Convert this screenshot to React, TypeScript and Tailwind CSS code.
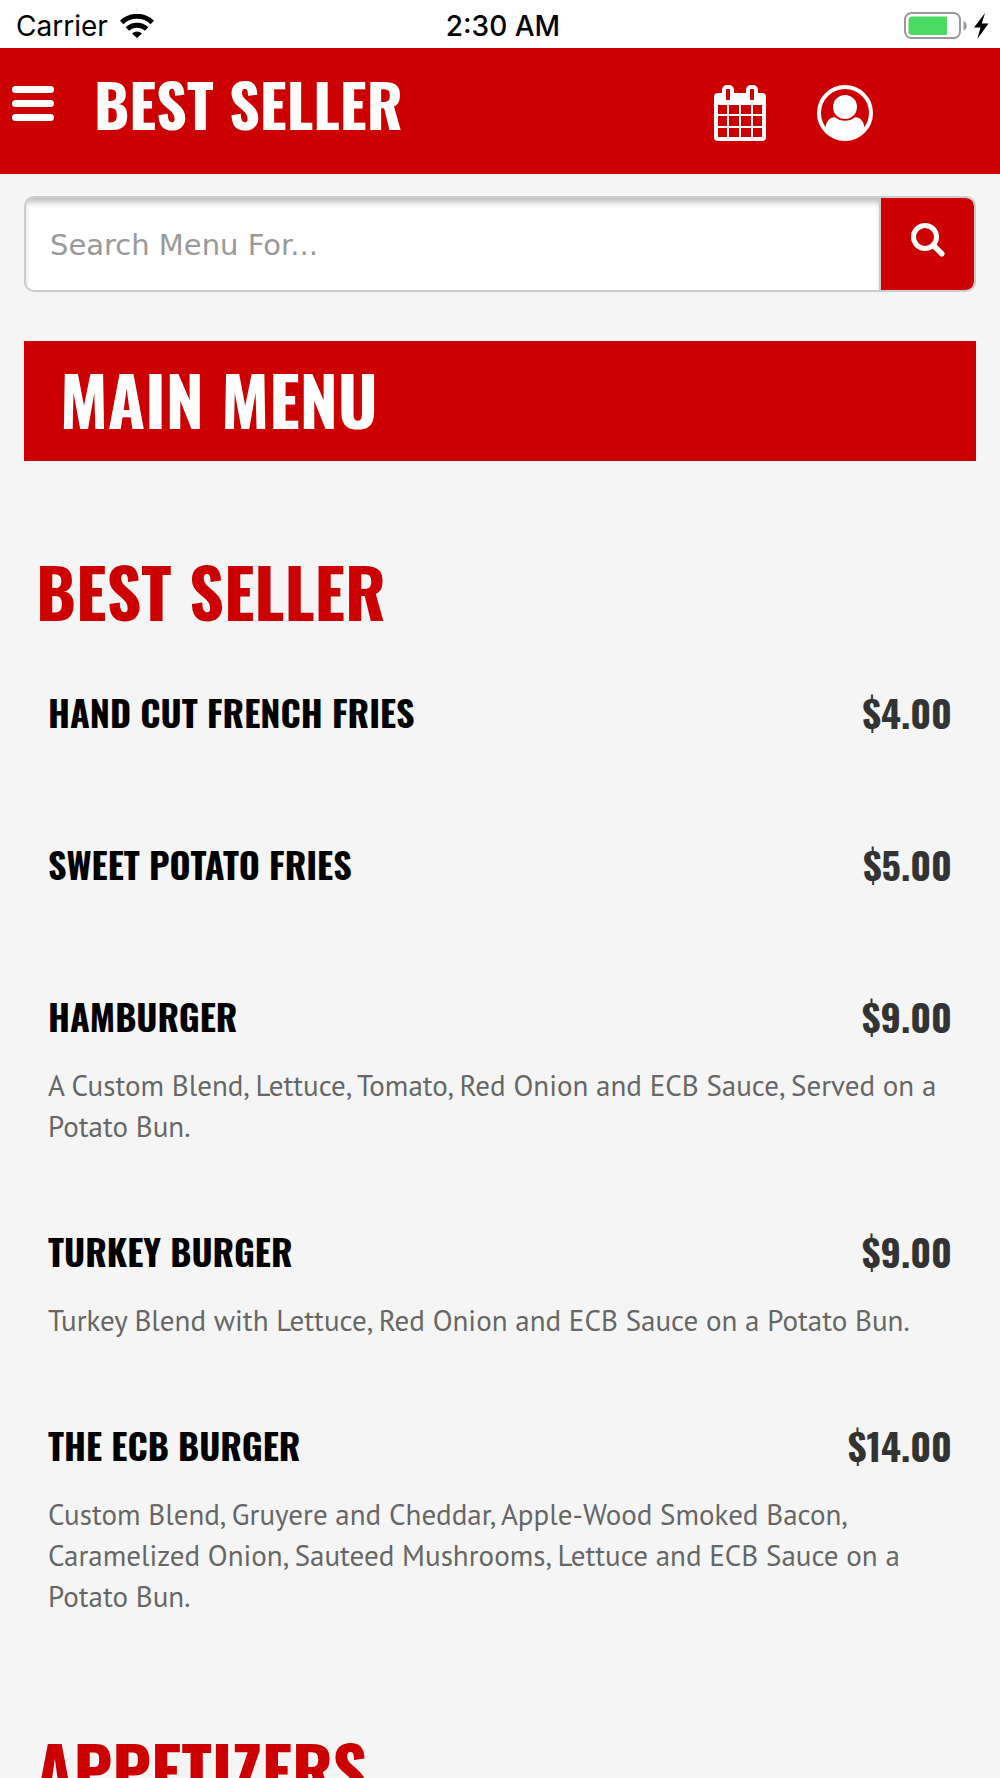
const menu = [
  {
    title: 'BEST SELLER',
    items: [
      { name: 'HAND CUT FRENCH FRIES', price: '$4.00' },
      { name: 'SWEET POTATO FRIES', price: '$5.00' },
      {
        name: 'HAMBURGER',
        price: '$9.00',
        description:
          'A Custom Blend, Lettuce, Tomato, Red Onion and ECB Sauce, Served on a Potato Bun.',
      },
      {
        name: 'TURKEY BURGER',
        price: '$9.00',
        description: 'Turkey Blend with Lettuce, Red Onion and ECB Sauce on a Potato Bun.',
      },
      {
        name: 'THE ECB BURGER',
        price: '$14.00',
        description:
          'Custom Blend, Gruyere and Cheddar, Apple-Wood Smoked Bacon, Caramelized Onion, Sauteed Mushrooms, Lettuce and ECB Sauce on a Potato Bun.',
      },
    ],
  },
  { title: 'APPETIZERS', items: [] },
];

function WifiIcon() {
  return (
    <svg className="h-6 w-[34px]" viewBox="0 0 34 24" aria-hidden="true">
      <g fill="none" stroke="#000" strokeWidth="5">
        <path d="M1.7 8.500a22 22 0 0 1 30.6 0" />
        <path d="M7.400 15a14 14 0 0 1 19.200 0" />
      </g>
      <path d="M17 24l-5-4.500a7.600 7.600 0 0 1 10 0z" />
    </svg>
  );
}

function BatteryIcon() {
  return (
    <svg className="h-[28px] w-[86px]" viewBox="0 0 86 28" aria-hidden="true">
      <rect x="1" y="1" width="55" height="25" rx="6.5" fill="#fff" stroke="#999" strokeWidth="2" />
      <path d="M8 4.500h35v18.500H8a3.500 3.500 0 0 1-3.500-3.500V8A3.500 3.500 0 0 1 8 4.500z" fill="#4cd964" />
      <path d="M59.500 9c2 .6 3.200 2.500 3.200 4.800s-1.200 4.200-3.200 4.800z" fill="#999" />
      <path d="M81 1L70 15.500h6.500L73.300 27 84.500 11.500h-6.700z" fill="#000" />
    </svg>
  );
}

function CalendarIcon() {
  return (
    <svg className="h-14 w-[52px]" viewBox="0 0 52 56" aria-hidden="true">
      <rect y="8" width="52" height="48" rx="4" fill="#fff" />
      <rect x="8" width="12" height="18" rx="5" fill="#fff" />
      <rect x="32" width="12" height="18" rx="5" fill="#fff" />
      <g fill="#c00">
        <rect x="12" y="4" width="4" height="11" rx="1" />
        <rect x="36" y="4" width="4" height="11" rx="1" />
        {[20, 31, 43].map((y) => (
          <g key={y}>
            <rect x="4" y={y} width="9" height={y === 31 ? 10 : 9} />
            <rect x="15" y={y} width="10" height={y === 31 ? 10 : 9} />
            <rect x="27" y={y} width="10" height={y === 31 ? 10 : 9} />
            <rect x="39" y={y} width="9" height={y === 31 ? 10 : 9} />
          </g>
        ))}
      </g>
    </svg>
  );
}

function UserIcon() {
  return (
    <svg className="size-14" viewBox="0 0 56 56" aria-hidden="true">
      <circle cx="28" cy="28" r="26" fill="none" stroke="#fff" strokeWidth="4" />
      <circle cx="28" cy="22" r="12" fill="#fff" />
      <path d="M8.500 43c.5-6 3.500-10.800 9.500-10.800 5.500 4.700 14.500 4.700 20 0 6 0 9 4.800 9.500 10.800A25 25 0 0 1 28 54 25 25 0 0 1 8.500 43z" fill="#fff" />
    </svg>
  );
}

function SearchIcon() {
  return (
    <svg className="size-[34px]" viewBox="0 0 34 34" aria-hidden="true">
      <circle cx="14" cy="14" r="11.500" fill="none" stroke="#fff" strokeWidth="5" />
      <path d="M22.500 22.500l8.300 8.300" stroke="#fff" strokeWidth="5.500" strokeLinecap="round" />
    </svg>
  );
}

export default function App() {
  return (
    <div className="min-h-screen bg-[#f5f5f5]">
      <div className="grid h-12 grid-cols-3 items-center bg-white pt-1 pr-[10px] pl-4 font-[Inter,sans-serif] text-[28px] text-black">
        <div className="flex items-center gap-3">
          <span>Carrier</span>
          <WifiIcon />
        </div>
        <span className="text-center font-medium">2:30 AM</span>
        <div className="flex justify-end">
          <BatteryIcon />
        </div>
      </div>

      <header className="flex h-[126px] items-start bg-[#c00] pt-5 pr-[127px] pl-3 text-white">
        <button type="button" aria-label="Open menu" className="mt-[18px] flex w-[42px] flex-col gap-[7px]">
          <span className="h-[7px] w-full rounded-sm bg-white" />
          <span className="h-[7px] w-full rounded-sm bg-white" />
          <span className="h-[7px] w-full rounded-sm bg-white" />
        </button>
        <h1 className="ml-10 flex-1 font-[Oswald,sans-serif] text-[60px] leading-[70px] font-bold">
          BEST SELLER
        </h1>
        <div className="mt-[17px] flex gap-[51px]">
          <button type="button" aria-label="Calendar">
            <CalendarIcon />
          </button>
          <button type="button" aria-label="Account">
            <UserIcon />
          </button>
        </div>
      </header>

      <main className="px-6 pt-[22px]">
        <form className="flex h-24 overflow-hidden rounded-[10px] border-2 border-[#ccc] bg-white">
          <input
            type="text"
            aria-label="Search menu"
            placeholder="Search Menu For..."
            className="min-w-0 flex-1 border-r-2 border-[#ccc] px-6 pt-1 font-['DejaVu_Sans',sans-serif] text-[29px] shadow-[inset_0_6px_6px_-2px_#bbb] outline-none placeholder:text-[#999]"
          />
          <button
            type="button"
            aria-label="Search"
            className="flex w-[93px] items-center justify-center rounded-r-lg bg-[#c00] pb-2"
          >
            <SearchIcon />
          </button>
        </form>

        <h2 className="mt-[49px] mb-[54px] h-[120px] bg-[#c00] px-9 font-[Oswald,sans-serif] text-[68px] leading-[116px] font-bold text-white">
          MAIN MENU
        </h2>

        {menu.map((section) => (
          <section key={section.title} className="px-3 pt-7">
            <h2 className="mb-[45px] font-[Oswald,sans-serif] text-[68px] leading-[96px] font-bold text-[#c00]">
              {section.title}
            </h2>
            {section.items.map((item) => (
              <article key={item.name} className="px-3 pb-[76px]">
                <div className="mb-5 flex justify-between font-[Oswald,sans-serif] leading-[56px] font-bold">
                  <h3 className="text-[36px] text-black">{item.name}</h3>
                  <span className="text-[38px] text-[#333]">{item.price}</span>
                </div>
                {item.description && (
                  <p className="pt-px font-['PT_Sans',sans-serif] text-[29px] leading-[41px] text-[#666]">
                    {item.description}
                  </p>
                )}
              </article>
            ))}
          </section>
        ))}
      </main>
    </div>
  );
}
